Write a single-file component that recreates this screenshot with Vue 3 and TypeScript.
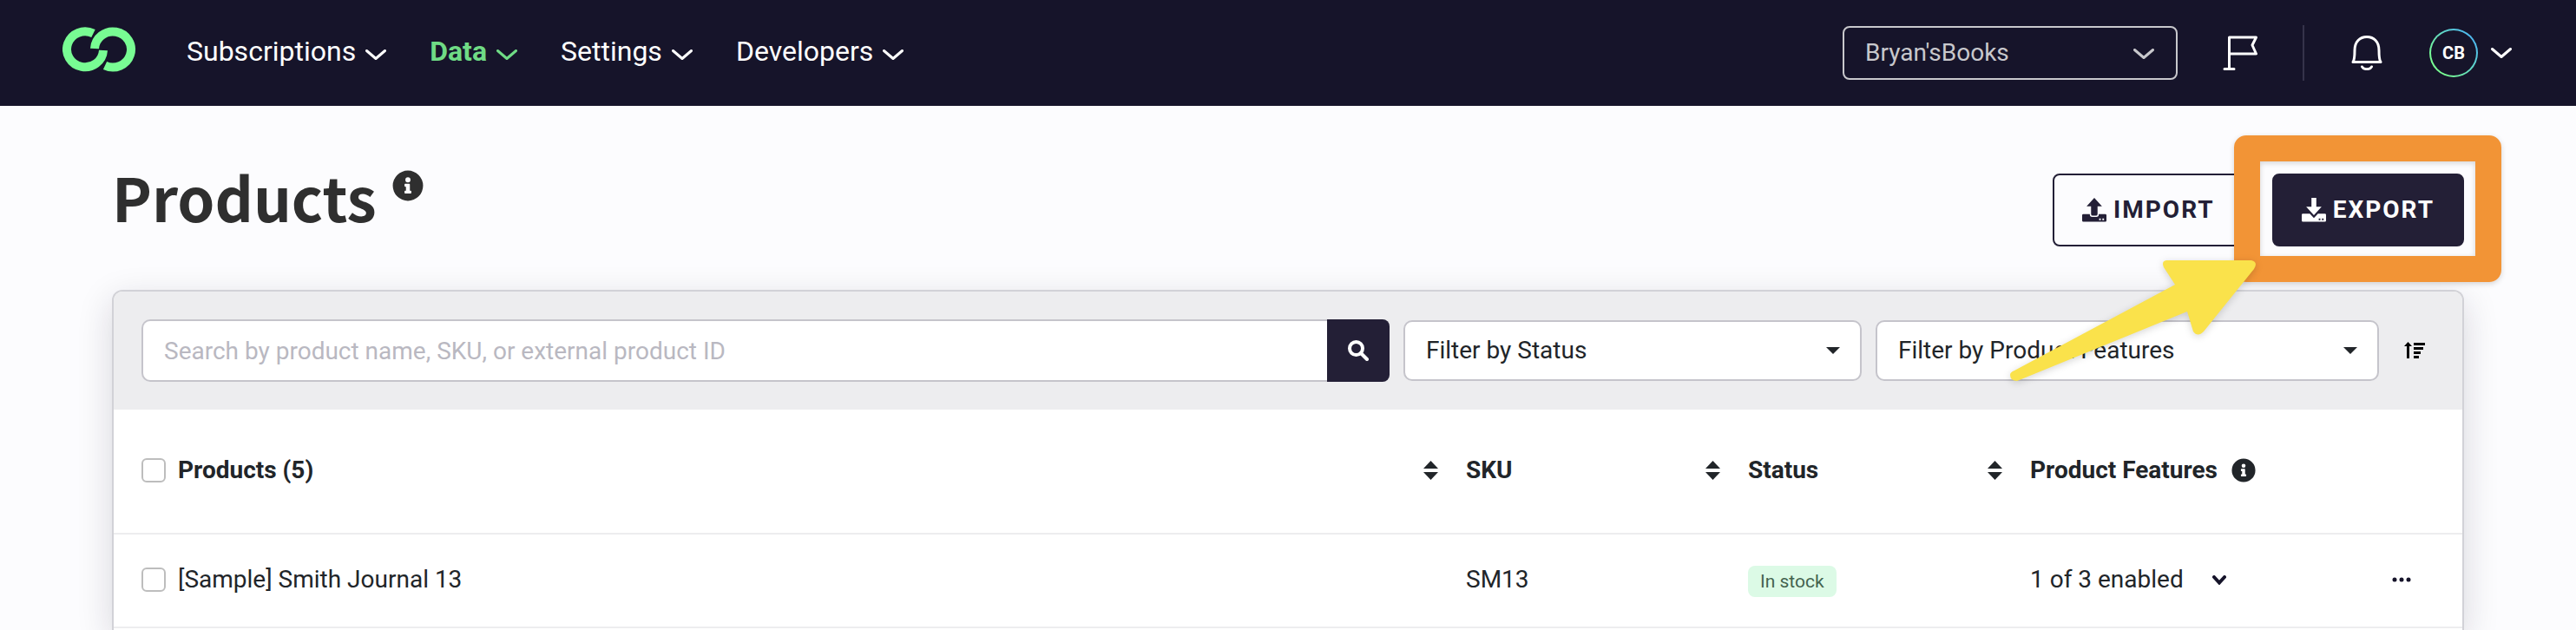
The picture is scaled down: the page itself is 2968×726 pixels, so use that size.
<script setup lang="ts">
const navItems = [
  { label: 'Subscriptions', active: false },
  { label: 'Data', active: true },
  { label: 'Settings', active: false },
  { label: 'Developers', active: false },
]

const products = [
  { name: '[Sample] Smith Journal 13', sku: 'SM13', status: 'In stock', features: '1 of 3 enabled' },
]
</script>

<template>
  <div class="page">
    <header class="topbar">
      <a class="logo" href="#" aria-label="Home">
        <svg width="85" height="52" viewBox="0 0 85 52">
          <g fill="none" stroke="#78fc93" stroke-width="10">
            <path d="M35.5 7.5A21 20.5 0 1 0 47 27" />
            <path d="M37 25A21 20.5 0 1 1 49 44.5" />
          </g>
        </svg>
      </a>
      <nav class="nav">
        <a v-for="item in navItems" :key="item.label" href="#" class="nav-link" :class="{ active: item.active }">
          <span>{{ item.label }}</span>
          <svg width="24" height="12" viewBox="0 0 24 12"><path d="M1.5 1.5L12 10.5L22.5 1.5" fill="none" stroke="currentColor" stroke-width="3" stroke-linecap="round" stroke-linejoin="round" /></svg>
        </a>
      </nav>
      <div class="tools">
        <div class="site-picker">
          <select aria-label="Site">
            <option>Bryan'sBooks</option>
          </select>
          <svg class="picker-arrow" width="24" height="12" viewBox="0 0 24 12"><path d="M1.5 1.5L12 10.5L22.5 1.5" fill="none" stroke="currentColor" stroke-width="3" stroke-linecap="round" stroke-linejoin="round" /></svg>
        </div>
        <button class="icon-btn" type="button" aria-label="Flags">
          <svg width="40" height="40" viewBox="0 0 40 40" fill="none" stroke="#fff" stroke-width="3" stroke-linejoin="round" stroke-linecap="round"><path d="M7.5 38V2H38.5L34 11L38.5 21H7.5M2 38.5H13" /></svg>
        </button>
        <span class="divider"></span>
        <button class="icon-btn" type="button" aria-label="Notifications">
          <svg width="36" height="40" viewBox="0 0 36 40" fill="none" stroke="#fff" stroke-width="3" stroke-linejoin="round" stroke-linecap="round"><path d="M2 30.5C4 28 4 22 4 17C4 7 10 1.500 18 1.500S32 7 32 17C32 22 32 28 34 30.500ZM12.500 36C14 39.500 22 39.500 23.500 36" /></svg>
        </button>
        <button class="account" type="button">
          <span class="avatar">CB</span>
          <svg width="24" height="12" viewBox="0 0 24 12"><path d="M1.5 1.5L12 10.5L22.5 1.5" fill="none" stroke="currentColor" stroke-width="3" stroke-linecap="round" stroke-linejoin="round" /></svg>
        </button>
      </div>
    </header>

    <main class="content">
      <div class="heading">
        <h1>Products</h1>
        <svg class="heading-info" width="36" height="36" viewBox="0 0 512 512"><path fill="#2f2f2f" d="M256 8a248 248 0 1 0 0 496 248 248 0 1 0 0-496zm0 110a42 42 0 1 1 0 84 42 42 0 1 1 0-84zm56 254c0 7-5 12-12 12h-88c-7 0-12-5-12-12v-24c0-7 5-12 12-12h12v-64h-12c-7 0-12-5-12-12v-24c0-7 5-12 12-12h64c7 0 12 5 12 12v100h12c7 0 12 5 12 12z" /></svg>
        <div class="actions">
          <button class="btn outline" type="button">
            <svg width="28" height="28" viewBox="0 0 30 30" fill="currentColor"><path d="M15 0L24.5 10.5H19V20a2 2 0 0 1-2 2H13a2 2 0 0 1-2-2V10.5H5.5Z" /><path fill-rule="evenodd" d="M1.5 20H9.5V20.5a3 3 0 0 0 3 3H17.5a3 3 0 0 0 3-3V20H28.5a1.500 1.500 0 0 1 1.500 1.500V28a1.500 1.500 0 0 1-1.500 1.500H1.500A1.500 1.500 0 0 1 0 28V21.500A1.500 1.500 0 0 1 1.500 20ZM21 25.500v2h2v-2ZM25 25.500v2h2v-2Z" /></svg>
            <span>IMPORT</span>
          </button>
          <div class="export-spot">
            <button class="btn solid" type="button">
              <svg width="28" height="28" viewBox="0 0 30 30" fill="currentColor"><path d="M12 0H18V11H24.5L15 21.500L5.500 11H12Z" /><path fill-rule="evenodd" d="M1.5 19.5H10L15 25L20 19.500H28.500a1.500 1.500 0 0 1 1.500 1.500V28a1.500 1.500 0 0 1-1.500 1.500H1.500A1.500 1.500 0 0 1 0 28V21A1.500 1.500 0 0 1 1.500 19.500ZM21 25.500v2h2v-2ZM25 25.500v2h2v-2Z" /></svg>
              <span>EXPORT</span>
            </button>
            <div class="highlight"></div>
            <svg class="pointer" width="300" height="160" viewBox="0 0 300 160">
              <path d="M187 10H285Q293 12 288 20L230 92Q223 99 218 92L211 69L15 149Q7 149 7 142Q7 139 12 137L197 38L184 18Q181 11 187 10Z" fill="#fae24b" />
            </svg>
          </div>
        </div>
      </div>

      <section class="card">
        <div class="toolbar">
          <form class="search" @submit.prevent>
            <input type="search" aria-label="Search products" placeholder="Search by product name, SKU, or external product ID" />
            <button type="submit" aria-label="Search">
              <svg width="24" height="24" viewBox="0 0 24 24" fill="none" stroke="#fff" stroke-width="4"><circle cx="9.5" cy="9.5" r="7.5" /><path d="M15 15L22 22" stroke-linecap="round" /></svg>
            </button>
          </form>
          <div class="filter status-filter">
            <select aria-label="Filter by Status"><option>Filter by Status</option></select>
            <svg class="caret" width="16" height="8" viewBox="0 0 16 8"><path d="M0 0H16L8 8Z" fill="#212529" /></svg>
          </div>
          <div class="filter feature-filter">
            <select aria-label="Filter by Product Features"><option>Filter by Product Features</option></select>
            <svg class="caret" width="16" height="8" viewBox="0 0 16 8"><path d="M0 0H16L8 8Z" fill="#212529" /></svg>
          </div>
          <button class="sort-order" type="button" aria-label="Sort order">
            <svg width="24" height="20" viewBox="0 0 24 20"><path d="M4.5 0L9 5H6V19H3V5H0Z" /><path d="M11 1H24V4H11ZM11 6H22V9H11ZM11 11H19V14H11ZM11 16H17V19H11Z" /></svg>
          </button>
        </div>

        <table>
          <thead>
            <tr>
              <th scope="col">
                <div class="cell">
                  <label class="pick"><input type="checkbox" /><span>Products (5)</span></label>
                  <svg class="sorter" width="17" height="22" viewBox="0 0 17 22"><path d="M8.5 0L17 9H0ZM0 13H17L8.5 22Z" fill="#212529" /></svg>
                </div>
              </th>
              <th scope="col" class="mid">
                <div class="cell">SKU<svg class="sorter" width="17" height="22" viewBox="0 0 17 22"><path d="M8.5 0L17 9H0ZM0 13H17L8.5 22Z" fill="#212529" /></svg></div>
              </th>
              <th scope="col" class="mid">
                <div class="cell">Status<svg class="sorter" width="17" height="22" viewBox="0 0 17 22"><path d="M8.5 0L17 9H0ZM0 13H17L8.5 22Z" fill="#212529" /></svg></div>
              </th>
              <th scope="col" class="last" colspan="2">
                <div class="cell info-cell">
                  <span>Product Features</span>
                  <svg width="28" height="28" viewBox="0 0 512 512"><path fill="#212529" d="M256 8a248 248 0 1 0 0 496 248 248 0 1 0 0-496zm0 110a42 42 0 1 1 0 84 42 42 0 1 1 0-84zm56 254c0 7-5 12-12 12h-88c-7 0-12-5-12-12v-24c0-7 5-12 12-12h12v-64h-12c-7 0-12-5-12-12v-24c0-7 5-12 12-12h64c7 0 12 5 12 12v100h12c7 0 12 5 12 12z" /></svg>
                </div>
              </th>
            </tr>
          </thead>
          <tbody>
            <tr v-for="product in products" :key="product.sku">
              <td><label class="pick"><input type="checkbox" /><span>{{ product.name }}</span></label></td>
              <td>{{ product.sku }}</td>
              <td><span class="badge">{{ product.status }}</span></td>
              <td>
                <button class="expand" type="button">
                  <span>{{ product.features }}</span>
                  <svg width="16" height="11" viewBox="0 0 16 11"><path d="M2 2L8 8.5L14 2" fill="none" stroke="#16142a" stroke-width="4" stroke-linecap="round" /></svg>
                </button>
              </td>
              <td>
                <button class="more" type="button" aria-label="More actions">
                  <svg width="22" height="6" viewBox="0 0 22 6" fill="#16142a"><circle cx="3" cy="3" r="2.5" /><circle cx="11" cy="3" r="2.5" /><circle cx="19" cy="3" r="2.5" /></svg>
                </button>
              </td>
            </tr>
          </tbody>
        </table>
      </section>
    </main>
  </div>
</template>

<style>
body {
  margin: 0;
  background: #fcfcfe;
}
</style>

<style scoped>
.page {
  display: flex;
  flex-direction: column;
  min-height: 100vh;
  overflow: hidden;
  font-family: Roboto, "Liberation Sans", sans-serif;
  font-size: 28px;
  line-height: 40px;
  color: #212529;
}
.page * {
  box-sizing: border-box;
}
svg {
  display: block;
  flex: none;
}
button,
select,
input {
  font: inherit;
  color: inherit;
  margin: 0;
}
button {
  padding: 0;
  border: 0;
  background: none;
  cursor: pointer;
}
select {
  appearance: none;
  width: 100%;
  cursor: pointer;
}
.topbar {
  display: flex;
  align-items: center;
  height: 122px;
  padding: 0 74px 0 72px;
  background: #16142a;
  color: #fff;
}
.logo {
  margin: 0 58px 8px 0;
}
.nav {
  display: flex;
  gap: 50px;
  margin-bottom: 4px;
}
.nav-link {
  display: flex;
  align-items: center;
  gap: 11px;
  font-size: 32px;
  color: #fff;
  text-decoration: none;
}
.nav-link svg {
  margin-top: 7px;
}
.nav-link.active {
  color: #6fdb85;
  font-weight: 700;
}
.tools {
  display: flex;
  align-items: center;
  margin-left: auto;
}
.site-picker {
  position: relative;
  width: 386px;
  margin-right: 52px;
  color: #c8c8cc;
}
.site-picker select {
  display: block;
  height: 62px;
  padding: 0 24px;
  border: 2px solid #c8c8cc;
  border-radius: 8px;
  background: transparent;
}
.picker-arrow {
  position: absolute;
  right: 27px;
  top: 26px;
  pointer-events: none;
}
.divider {
  width: 2px;
  height: 64px;
  margin: 0 54px 0 52px;
  background: #35334a;
}
.account {
  display: flex;
  align-items: center;
  gap: 15px;
  margin-left: 54px;
}
.avatar {
  display: flex;
  align-items: center;
  justify-content: center;
  width: 56px;
  height: 56px;
  border: 2px solid transparent;
  border-radius: 50%;
  background:
    linear-gradient(#16142a, #16142a) padding-box,
    linear-gradient(50deg, #78fc93 20%, #4bb4f5 90%) border-box;
  font-size: 20px;
  font-weight: 700;
}
.content {
  display: flex;
  flex-direction: column;
  flex: 1;
  padding: 78px 129px 0;
}
.heading {
  display: flex;
  align-items: flex-start;
  height: 134px;
}
h1 {
  margin: 0;
  font-family: "Noto Sans CJK SC", "Noto Sans", sans-serif;
  font-size: 69px;
  line-height: 52px;
  font-weight: 700;
  color: #2f2f2f;
}
.heading-info {
  margin: -4px 0 0 18px;
}
.actions {
  display: flex;
  gap: 32px;
  margin-left: auto;
}
.btn {
  display: flex;
  align-items: center;
  gap: 8px;
  height: 84px;
  padding: 0 32px;
  border: 2px solid #231f36;
  border-radius: 8px;
  font-weight: 700;
  letter-spacing: 2px;
}
.outline {
  color: #231f36;
}
.solid {
  background: #231f36;
  color: #fff;
}
.export-spot {
  position: relative;
  z-index: 1;
}
.highlight {
  position: absolute;
  inset: -44px -43px -41px -44px;
  border: 30px solid #f29436;
  border-radius: 14px;
  box-shadow: 0 2px 6px rgba(0, 0, 0, 0.16), inset 0 2px 6px rgba(0, 0, 0, 0.16);
  pointer-events: none;
}
.pointer {
  position: absolute;
  right: 230px;
  top: 90px;
  filter: drop-shadow(0 2px 4px rgba(0, 0, 0, 0.16));
  pointer-events: none;
}
.card {
  flex: 1;
  border: 2px solid #d2d2d7;
  border-bottom: 0;
  border-radius: 12px 12px 0 0;
  background: #fff;
  box-shadow: 0 12px 40px rgba(22, 20, 42, 0.16);
}
.toolbar {
  display: flex;
  align-items: center;
  gap: 16px;
  height: 136px;
  padding: 0 43px 0 32px;
  border-radius: 10px 10px 0 0;
  background: #ededef;
}
.search {
  display: flex;
  flex: 1;
}
.search input {
  flex: 1;
  height: 72px;
  padding: 0 24px;
  border: 2px solid #c5c4cb;
  border-right: 0;
  border-radius: 10px 0 0 10px;
  background: #fff;
  outline: 0;
}
.search input::placeholder {
  color: #b9b8c1;
  opacity: 1;
}
.search button {
  display: grid;
  place-items: center;
  width: 72px;
  height: 72px;
  border-radius: 0 8px 8px 0;
  background: #231f36;
}
.filter {
  position: relative;
}
.filter select {
  display: block;
  height: 70px;
  padding: 0 24px;
  border: 2px solid #c5c4cb;
  border-radius: 10px;
  background: #fff;
}
.status-filter {
  width: 528px;
}
.feature-filter {
  width: 580px;
}
.caret {
  position: absolute;
  right: 25px;
  top: 31px;
  pointer-events: none;
}
.sort-order {
  margin-left: 13px;
}
table {
  width: 100%;
  border-collapse: separate;
  border-spacing: 0;
  table-layout: fixed;
}
th,
td {
  padding: 0 0 2px;
  border-bottom: 2px solid #ededef;
}
th {
  height: 144px;
  font-weight: 700;
  text-align: left;
}
td {
  height: 108px;
}
.mid {
  width: 325px;
}
.last {
  width: 498px;
}
.cell {
  display: flex;
  align-items: center;
  justify-content: space-between;
}
.sorter {
  margin-right: 32px;
}
.info-cell {
  justify-content: flex-start;
  gap: 16px;
}
.pick {
  display: flex;
  align-items: center;
  gap: 14px;
  padding-left: 32px;
}
.pick input {
  appearance: none;
  width: 28px;
  height: 28px;
  border: 2px solid #bdbdbd;
  border-radius: 6px;
  background: #fff;
}
.badge {
  display: inline-block;
  padding: 0 14px;
  border-radius: 8px;
  background: #dcfae6;
  color: #44634f;
  font-size: 21px;
  line-height: 36px;
}
.expand {
  display: flex;
  align-items: center;
  gap: 33px;
}
.more {
  display: block;
  margin: 0 59px 0 auto;
}
</style>
